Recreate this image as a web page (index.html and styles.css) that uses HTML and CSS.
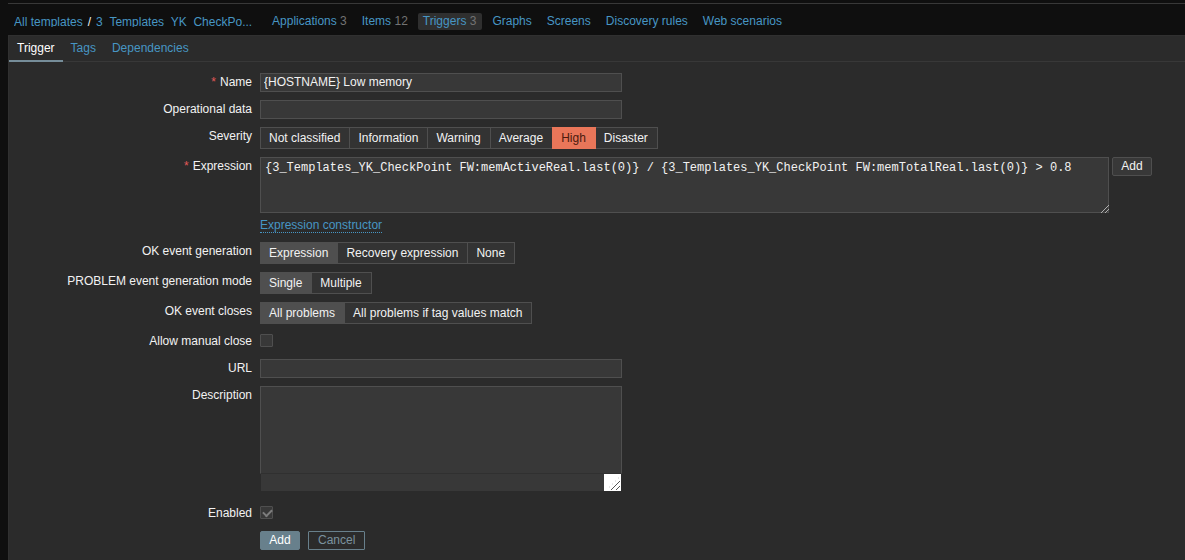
FILE: index.html
```html
<!DOCTYPE html>
<html lang="en">
<head>
<meta charset="utf-8">
<title>Configuration of triggers</title>
<link rel="stylesheet" href="styles.css">
</head>
<body>
<header class="page-nav">
  <nav class="breadcrumbs">
    <a class="link crumb" href="#">All templates</a>
    <span class="slash">/</span>
    <a class="link crumb template-name" href="#">3_Templates_YK_CheckPo...</a>
  </nav>
  <nav class="sections">
    <span class="section"><a class="link" href="#">Applications</a> 3</span>
    <span class="section"><a class="link" href="#">Items</a> 12</span>
    <span class="section selected"><a class="link" href="#">Triggers</a> 3</span>
    <span class="section"><a class="link" href="#">Graphs</a></span>
    <span class="section"><a class="link" href="#">Screens</a></span>
    <span class="section"><a class="link" href="#">Discovery rules</a></span>
    <span class="section"><a class="link" href="#">Web scenarios</a></span>
  </nav>
</header>
<main class="panel">
  <nav class="tabs">
    <a class="tab active" href="#">Trigger</a>
    <a class="tab" href="#">Tags</a>
    <a class="tab" href="#">Dependencies</a>
  </nav>
  <form class="form">
    <label class="label required" for="name">Name</label>
    <input class="text" id="name" type="text" value="{HOSTNAME} Low memory">

    <label class="label" for="opdata">Operational data</label>
    <input class="text" id="opdata" type="text">

    <span class="label" id="severity">Severity</span>
    <div class="segments" role="radiogroup" aria-labelledby="severity">
      <label class="segment"><input type="radio" name="severity">Not classified</label>
      <label class="segment"><input type="radio" name="severity">Information</label>
      <label class="segment"><input type="radio" name="severity">Warning</label>
      <label class="segment"><input type="radio" name="severity">Average</label>
      <label class="segment high"><input type="radio" name="severity" checked>High</label>
      <label class="segment"><input type="radio" name="severity">Disaster</label>
    </div>

    <label class="label required" for="expression">Expression</label>
    <div class="expression-field">
      <div class="expression-row">
        <div class="area-wrap">
          <textarea class="area expression" id="expression">{3_Templates_YK_CheckPoint FW:memActiveReal.last(0)} / {3_Templates_YK_CheckPoint FW:memTotalReal.last(0)} &gt; 0.8</textarea>
          <svg class="grip" viewBox="0 0 9 9" aria-hidden="true"><path d="M1 9L9 1M5 9L9 5"/></svg>
        </div>
        <button class="button" type="button">Add</button>
      </div>
      <a class="link constructor" href="#">Expression constructor</a>
    </div>

    <span class="label" id="okgen">OK event generation</span>
    <div class="segments" role="radiogroup" aria-labelledby="okgen">
      <label class="segment"><input type="radio" name="okgen" checked>Expression</label>
      <label class="segment"><input type="radio" name="okgen">Recovery expression</label>
      <label class="segment"><input type="radio" name="okgen">None</label>
    </div>

    <span class="label" id="mode">PROBLEM event generation mode</span>
    <div class="segments" role="radiogroup" aria-labelledby="mode">
      <label class="segment"><input type="radio" name="mode" checked>Single</label>
      <label class="segment"><input type="radio" name="mode">Multiple</label>
    </div>

    <span class="label" id="closes">OK event closes</span>
    <div class="segments" role="radiogroup" aria-labelledby="closes">
      <label class="segment"><input type="radio" name="closes" checked>All problems</label>
      <label class="segment"><input type="radio" name="closes">All problems if tag values match</label>
    </div>

    <label class="label" for="manual">Allow manual close</label>
    <div class="check-field"><input class="check" id="manual" type="checkbox"></div>

    <label class="label" for="url">URL</label>
    <input class="text" id="url" type="text">

    <label class="label" for="description">Description</label>
    <div class="description-field">
      <textarea class="area description" id="description"></textarea>
      <div class="scroll-track">
        <svg class="corner" viewBox="0 0 17 17" aria-hidden="true"><path d="M7 16L16 7M12 16L16 12"/><path class="faint" d="M5 13h1M8 10h1M11 7h1M14 4h1"/></svg>
      </div>
    </div>

    <label class="label" for="enabled">Enabled</label>
    <div class="check-field"><input class="check" id="enabled" type="checkbox" checked></div>

    <div class="actions">
      <button class="button primary" type="submit">Add</button>
      <button class="button cancel" type="button">Cancel</button>
    </div>
  </form>
</main>
</body>
</html>
```
FILE: styles.css
```css
* {
  box-sizing: border-box;
}

body {
  margin: 0;
  padding: 3px 0 0 8px;
  min-height: 100vh;
  display: flex;
  flex-direction: column;
  background: #0f0f0f;
  color: #f2f2f2;
  font: 12px/14px "Liberation Sans", Arial, sans-serif;
}

input,
textarea,
button {
  margin: 0;
  color: inherit;
  font: inherit;
}

.link {
  color: #4796c4;
  text-decoration: none;
}

.page-nav {
  display: flex;
  align-items: flex-start;
  gap: 14px;
  height: 32px;
  padding: 9px 0 0 6px;
  border-top: 1px solid #383838;
  white-space: nowrap;
}

.breadcrumbs {
  display: flex;
  gap: 5px;
  padding-top: 2px;
}

.crumb {
  height: 12px;
  overflow: hidden;
}

.template-name {
  width: 157px;
}

.sections {
  display: flex;
  gap: 5px;
}

.section {
  padding: 1px 5px 2px;
  color: #737373;
}

.section.selected {
  padding-right: 6px;
  background: #2f2f2f;
  border-radius: 2px;
}

.panel {
  flex: 1;
  background: #2b2b2b;
  border: 1px solid #303030;
  border-width: 1px 0 0 1px;
}

.tabs {
  display: flex;
  border-bottom: 1px solid #383838;
}

.tab {
  margin-bottom: -1px;
  padding: 5px 8px;
  color: #4796c4;
  text-decoration: none;
  border-bottom: 2px solid transparent;
}

.tab.active {
  color: #ffffff;
  border-bottom-color: #768d99;
}

.form {
  display: grid;
  grid-template-columns: 243px minmax(0, 1fr);
  gap: 8px;
  align-items: start;
  padding: 11px 33px 10px 0;
}

.label {
  padding-top: 2px;
  text-align: right;
}

.required::before {
  content: "*";
  margin-right: 4px;
  color: #e45959;
}

.text,
.area {
  display: block;
  background: #383838;
  border: 1px solid #4f4f4f;
  outline: none;
}

.text {
  width: 100%;
  max-width: 362px;
  height: 19px;
  padding: 0 3px 2px;
}

.area {
  width: 100%;
  padding: 3px 4px;
  resize: none;
}

.segments {
  display: flex;
  justify-self: start;
  border: 1px solid #4f4f4f;
  background: #333333;
  white-space: nowrap;
}

.segment {
  padding: 3px 9px 3px 8px;
  border-right: 1px solid #4f4f4f;
}

.segment:last-child {
  border-right: 0;
}

.segment input {
  position: absolute;
  opacity: 0;
  pointer-events: none;
}

.segment:has(:checked) {
  background: #4f4f4f;
}

.segment.high:has(:checked) {
  margin: -1px 0 -1px -1px;
  padding: 4px 9px;
  border-right-color: #e97659;
  background: #e97659;
  color: #4b1b0e;
}

.expression-row {
  display: flex;
  align-items: flex-start;
  gap: 3px;
}

.area-wrap {
  position: relative;
  flex: 0 1 849px;
}

.expression {
  height: 56px;
  font-family: "Liberation Mono", "Courier New", monospace;
}

.grip {
  position: absolute;
  right: 0;
  bottom: 0;
  width: 9px;
  height: 9px;
  fill: none;
  stroke: #b0b0b0;
}

.constructor {
  display: inline-block;
  margin: 5px 0 1px;
  border-bottom: 1px dotted #4796c4;
}

.check-field {
  height: 19px;
  padding-top: 2px;
}

.check {
  display: block;
  appearance: none;
  width: 13px;
  height: 13px;
  border: 1px solid #4f4f4f;
  border-radius: 1px;
  background: #383838;
}

.check:checked::before {
  content: "";
  display: block;
  width: 7px;
  height: 4px;
  margin: 2px;
  border: solid #7d7d7d;
  border-width: 0 0 2px 2px;
  transform: rotate(-45deg);
}

.description-field {
  max-width: 362px;
  margin-bottom: 5px;
}

.description {
  height: 88px;
  border-bottom-color: #303030;
}

.scroll-track {
  display: flex;
  justify-content: flex-end;
  margin: 0 1px;
  background: #383838;
}

.corner {
  width: 17px;
  height: 17px;
  background: #ffffff;
  fill: none;
  stroke: #555555;
}

.faint {
  stroke: #cccccc;
}

.button {
  min-width: 40px;
  height: 19px;
  padding: 0 8px;
  border: 1px solid #4f4f4f;
  border-radius: 2px;
  background: #383838;
  line-height: 17px;
}

.actions {
  grid-column: 2;
  display: flex;
  gap: 8px;
}

.primary {
  background: #68808c;
  border-color: #68808c;
  color: #ffffff;
}

.cancel {
  padding: 0 9px;
  background: transparent;
  border-color: #68808c;
  border-radius: 1px;
  color: #7b929e;
}
```
